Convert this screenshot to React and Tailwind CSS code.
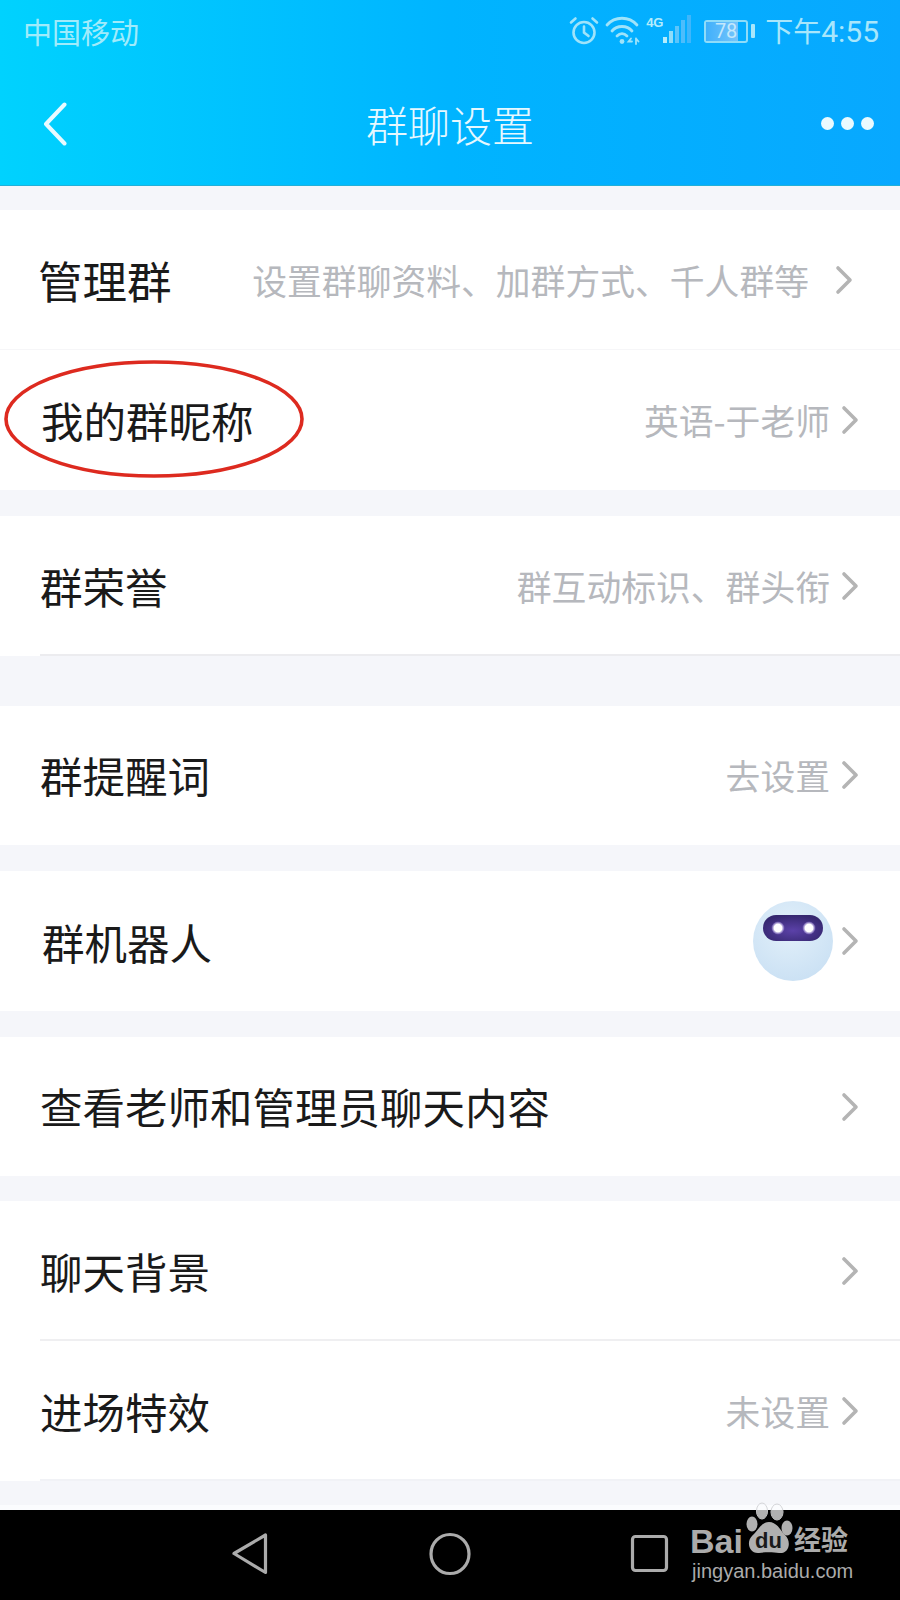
const cjk = { fontFamily: '"Noto Sans CJK SC", "Liberation Sans", sans-serif' };
const latin = { fontFamily: '"Liberation Sans", sans-serif' };

function Chevron() {
  return (
    <svg width="18" height="30" viewBox="0 0 18 30" fill="none" stroke="#b4b4b4" strokeWidth="3.6" strokeLinecap="round" strokeLinejoin="round">
      <path d="M3 3 L15 15 L3 27" />
    </svg>
  );
}

function Row({ label, value, labelClass = "text-[42.5px]", valueClass = "text-[34.8px]", pl = "pl-10", pr = "pr-[41px]", h = "h-[140px]", gap = "gap-[11px]", children, divider }) {
  return (
    <div className={`relative flex items-center justify-between bg-white ${h} ${pl} ${pr}`}>
      <span className={`${labelClass} text-[#1a1a1a] leading-none whitespace-nowrap`}>{label}</span>
      <div className={`flex items-center ${gap}`}>
        {value && <span className={`${valueClass} text-[#b6b8bd] leading-none whitespace-nowrap`}>{value}</span>}
        {children}
        <Chevron />
      </div>
      {divider && <div className={`absolute bottom-0 right-0 ${divider}`} />}
    </div>
  );
}

function StatusIcons() {
  return (
    <div className="flex items-center text-[#a8e6fb]">
      <svg width="30" height="30" viewBox="0 0 30 30" fill="none" stroke="#9fe3fa" strokeWidth="2.6" strokeLinecap="round" className="mr-[6px]">
        <circle cx="15" cy="16.5" r="10.5" />
        <path d="M15 10.5 V16.5 L19.5 20" />
        <path d="M2 6.5 L6.5 2.5 M28 6.5 L23.5 2.5" />
      </svg>
      <svg width="36" height="30" viewBox="0 0 36 30" fill="none" stroke="#9fe3fa" strokeWidth="2.8" strokeLinecap="round" className="mr-[5px]">
        <path d="M2 9 C10 0 24 0 32 9" />
        <path d="M7 15 C12 9 22 9 27 15" />
        <path d="M12 20 C15 17 19 17 22 20" />
        <circle cx="17" cy="25.5" r="2.4" fill="#9fe3fa" stroke="none" />
        <path d="M26 22.5 L23.5 25.5 H27 M31 22.5 V28 M31 22.5 L33.5 25.5" strokeWidth="1.8" />
      </svg>
      <div className="relative w-[46px] h-[28px] mr-[12px] mb-[4px]">
        <span className="absolute left-0 top-[1px] text-[13px] font-bold text-[#b5ecfc] leading-none" style={latin}>4G</span>
        <div className="absolute left-[17px] bottom-0 flex items-end gap-[2px]">
          <div className="w-[4px] h-[6px] bg-[#b5ecfc]" />
          <div className="w-[4px] h-[12px] bg-[#8fdcf9]" />
          <div className="w-[4px] h-[17px] bg-[#5cc5fb]" />
          <div className="w-[4px] h-[23px] bg-[#4dbdfb]" />
          <div className="w-[4px] h-[28px] bg-[#3fb6fb]" />
        </div>
      </div>
      <div className="relative w-[44px] h-[23px] border-2 border-[#8fdcf9] rounded-[3px] flex items-center justify-center overflow-hidden mr-[3px]">
        <div className="absolute left-0 top-0 bottom-0 w-[80%] bg-gradient-to-r from-[#3fb0fb] to-[#74c4fb]" />
        <span className="relative text-[20px] leading-none text-[#c4e8fc]" style={{ fontFamily: 'Roboto, sans-serif' }}>78</span>
      </div>
      <div className="w-[4px] h-[14px] bg-[#a8e6fb] rounded-[1px] mr-[10px]" />
      <span className="text-[28px] leading-none text-[#a8e6fb] whitespace-nowrap" style={cjk}>下午<span className="text-[30px]" style={{ fontFamily: 'Roboto, sans-serif' }}>4:55</span></span>
    </div>
  );
}

function Robot() {
  return (
    <svg width="80" height="80" viewBox="0 0 80 80" className="mr-[-3px]">
      <defs>
        <radialGradient id="face" cx="45%" cy="35%" r="75%">
          <stop offset="0%" stopColor="#e2f0fa" />
          <stop offset="100%" stopColor="#c8dff3" />
        </radialGradient>
        <radialGradient id="band" cx="50%" cy="60%" r="60%">
          <stop offset="0%" stopColor="#5b41a8" />
          <stop offset="100%" stopColor="#35276f" />
        </radialGradient>
        <radialGradient id="eyeGlow" cx="50%" cy="50%" r="50%">
          <stop offset="0%" stopColor="#ffffff" />
          <stop offset="60%" stopColor="#ffffff" />
          <stop offset="100%" stopColor="#a48fe0" stopOpacity="0.3" />
        </radialGradient>
      </defs>
      <circle cx="40" cy="40" r="40" fill="url(#face)" />
      <rect x="10" y="14" width="60" height="26" rx="13" fill="url(#band)" />
      <circle cx="25" cy="27" r="6.5" fill="url(#eyeGlow)" />
      <circle cx="56" cy="27" r="6.5" fill="url(#eyeGlow)" />
    </svg>
  );
}

function BaiduWatermark() {
  return (
    <div className="absolute left-[680px] top-[-15px] w-[180px] h-[95px] text-[#ababab]">
      <svg width="180" height="95" viewBox="0 0 180 95" className="absolute left-0 top-0">
        <defs>
          <clipPath id="below">
            <rect x="0" y="15" width="180" height="80" />
          </clipPath>
        </defs>
        <ellipse cx="82" cy="16" rx="5.5" ry="8" fill="none" stroke="#d4d5d8" strokeWidth="1" />
        <ellipse cx="97" cy="17" rx="6" ry="8" fill="none" stroke="#d4d5d8" strokeWidth="1" />
        <g clipPath="url(#below)">
          <ellipse cx="82" cy="16" rx="5.5" ry="8" fill="#b0b0b0" />
          <ellipse cx="97" cy="17" rx="6" ry="8" fill="#b0b0b0" />
        </g>
        <ellipse cx="72" cy="29" rx="5.5" ry="7.5" fill="#b0b0b0" />
        <ellipse cx="107" cy="33" rx="5.5" ry="7.5" fill="#b0b0b0" />
        <path d="M89 27 C97 27 100 35 105 40 C112 47 109 59 99 58 C93 57 85 57 79 58 C69 59 66 47 72 41 C78 36 81 27 89 27 Z" fill="#b0b0b0" />
      </svg>
      <span className="absolute left-[10px] top-[29px] text-[34px] font-bold leading-none" style={latin}>Bai</span>
      <span className="absolute left-[75px] top-[35px] text-[22px] font-bold leading-none text-[#1a1a1a]" style={latin}>du</span>
      <span className="absolute left-[114px] top-[30px] text-[27px] font-bold leading-none whitespace-nowrap" style={cjk}>经验</span>
      <span className="absolute left-[12px] top-[66px] text-[20px] leading-none whitespace-nowrap" style={latin}>jingyan.baidu.com</span>
    </div>
  );
}

export default function App() {
  return (
    <div className="w-[900px] h-[1600px] overflow-hidden flex flex-col bg-[#f5f6fa]" style={cjk}>
      <header className="relative h-[186px] shrink-0 bg-gradient-to-r from-[#00d2fe] via-[#00b4ff] to-[#08a8ff] border-b border-[#22b0d8]">
        <div className="flex items-center justify-between pl-[23px] pr-[21px] h-[62px]">
          <span className="text-[29px] leading-none text-[#a0ebfb]">中国移动</span>
          <StatusIcons />
        </div>
        <div className="relative flex items-center justify-between h-[123px] pl-[43px] pr-[26px]">
          <svg width="24" height="44" viewBox="0 0 24 44" fill="none" stroke="#e9faff" strokeWidth="4" strokeLinecap="round" strokeLinejoin="round">
            <path d="M21.5 2.5 L3 22 L21.5 41.5" />
          </svg>
          <span className="absolute left-0 right-0 text-center text-[42px] leading-none text-[#e6f8ff] font-light">群聊设置</span>
          <div className="flex gap-[7px]">
            <div className="w-[13px] h-[13px] rounded-full bg-[#eafaff]" />
            <div className="w-[13px] h-[13px] rounded-full bg-[#eafaff]" />
            <div className="w-[13px] h-[13px] rounded-full bg-[#eafaff]" />
          </div>
        </div>
      </header>

      <main className="flex-1 flex flex-col">
        <section className="mt-[24px] flex flex-col">
          <Row label="管理群" labelClass="text-[44.5px]" value="设置群聊资料、加群方式、千人群等" pl="pl-[38px]" pr="pr-[47px]" gap="gap-[26px]" divider="left-0 h-[1px] bg-[#f6f6f8]" />
          <Row label="我的群昵称" value="英语-于老师" pl="pl-[41px]" />
        </section>
        <section className="mt-[26px]">
          <Row label="群荣誉" value="群互动标识、群头衔" divider="left-10 h-[2px] bg-[#ececef]" />
        </section>
        <section className="mt-[50px]">
          <Row label="群提醒词" value="去设置" h="h-[139px]" />
        </section>
        <section className="mt-[26px]">
          <Row label="群机器人" labelClass="text-[42.5px] pt-[3px]" pl="pl-[42px]"><Robot /></Row>
        </section>
        <section className="mt-[26px]">
          <Row label="查看老师和管理员聊天内容" h="h-[139px]" />
        </section>
        <section className="mt-[25px] flex flex-col">
          <Row label="聊天背景" divider="left-10 h-[2px] bg-[#efeff1]" />
          <Row label="进场特效" value="未设置" divider="left-10 h-[2px] bg-[#f1f2f6]" />
        </section>
        <div className="mt-auto h-[5px] bg-[#fbfcfe]" />
      </main>

      <footer className="relative h-[90px] shrink-0 bg-black">
        <svg width="40" height="44" viewBox="0 0 40 44" fill="none" stroke="#ababab" strokeWidth="3.2" strokeLinejoin="round" className="absolute left-[231px] top-[22px]">
          <path d="M34.5 3 V40.5 L3 21.5 Z" />
        </svg>
        <svg width="44" height="44" viewBox="0 0 44 44" fill="none" stroke="#ababab" strokeWidth="3.2" className="absolute left-[428px] top-[22px]">
          <ellipse cx="22" cy="22" rx="19" ry="19.5" />
        </svg>
        <svg width="40" height="40" viewBox="0 0 40 40" fill="none" stroke="#ababab" strokeWidth="3.2" className="absolute left-[630px] top-[24px]">
          <rect x="2.5" y="2.5" width="34" height="34" rx="3" />
        </svg>
        <BaiduWatermark />
      </footer>

      <svg width="304" height="122" viewBox="0 0 304 122" fill="none" className="absolute left-[2px] top-[358px]">
        <ellipse cx="152" cy="61" rx="148" ry="57" stroke="#dd2a1f" strokeWidth="3.6" />
      </svg>
    </div>
  );
}
